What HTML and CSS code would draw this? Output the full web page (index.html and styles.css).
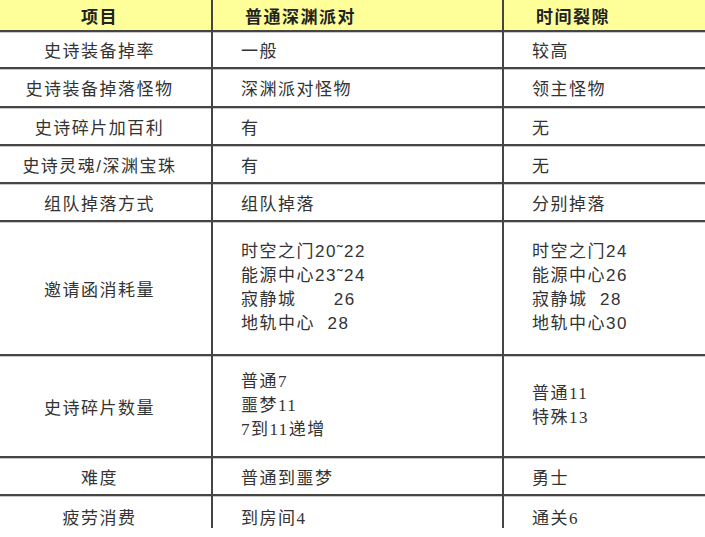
FILE: index.html
```html
<!DOCTYPE html>
<html lang="zh-CN">
<head>
<meta charset="utf-8">
<title>深渊派对对比</title>
<link rel="stylesheet" href="styles.css">
</head>
<body>
<div class="sheet">
  <div class="row head">
    <div class="c1">项目</div>
    <div class="c2">普通深渊派对</div>
    <div class="c3">时间裂隙</div>
  </div>
  <div class="row r1">
    <div class="c1">史诗装备掉率</div>
    <div class="c2">一般</div>
    <div class="c3">较高</div>
  </div>
  <div class="row r2">
    <div class="c1">史诗装备掉落怪物</div>
    <div class="c2">深渊派对怪物</div>
    <div class="c3">领主怪物</div>
  </div>
  <div class="row r3">
    <div class="c1">史诗碎片加百利</div>
    <div class="c2">有</div>
    <div class="c3">无</div>
  </div>
  <div class="row r3">
    <div class="c1">史诗灵魂/深渊宝珠</div>
    <div class="c2">有</div>
    <div class="c3">无</div>
  </div>
  <div class="row r3">
    <div class="c1">组队掉落方式</div>
    <div class="c2">组队掉落</div>
    <div class="c3">分别掉落</div>
  </div>
  <div class="row r6">
    <div class="c1">邀请函消耗量</div>
    <div class="c2 multi">
      <span>时空之门20˜22</span>
      <span>能源中心23˜24</span>
      <span>寂静城&nbsp;&nbsp;&nbsp;&nbsp;&nbsp;&nbsp;26</span>
      <span>地轨中心&nbsp;&nbsp;28</span>
    </div>
    <div class="c3 multi">
      <span>时空之门24</span>
      <span>能源中心26</span>
      <span>寂静城&nbsp;&nbsp;28</span>
      <span>地轨中心30</span>
    </div>
  </div>
  <div class="row r7">
    <div class="c1">史诗碎片数量</div>
    <div class="c2 multi serifnum">
      <span>普通7</span>
      <span>噩梦11</span>
      <span>7到11递增</span>
    </div>
    <div class="c3 multi serifnum">
      <span>普通11</span>
      <span>特殊13</span>
    </div>
  </div>
  <div class="row r3">
    <div class="c1">难度</div>
    <div class="c2">普通到噩梦</div>
    <div class="c3">勇士</div>
  </div>
  <div class="row last">
    <div class="c1">疲劳消费</div>
    <div class="c2 serifnum">到房间4</div>
    <div class="c3 serifnum">通关6</div>
  </div>
</div>
</body>
</html>
```

FILE: styles.css
```css
html, body {
  margin: 0;
  padding: 0;
  background: #ffffff;
}

body {
  width: 705px;
  height: 537px;
  overflow: hidden;
  font-family: "Liberation Sans", "Noto Sans CJK SC", sans-serif;
  font-size: 17px;
  letter-spacing: 1.5px;
  color: #333333;
}

.sheet {
  height: 528px;
  overflow: hidden;
  display: flex;
  flex-direction: column;
}

.row {
  display: grid;
  grid-template-columns: 211px 291px 1fr;
  border-bottom: 2px solid #454545;
  box-shadow: 0 1px 0 #c8c8c8;
  box-sizing: border-box;
  flex: none;
}

.row > div {
  display: flex;
  align-items: center;
}

.c1 {
  justify-content: center;
  padding-right: 12px;
}

.c2, .c3 {
  border-left: 2px solid #454545;
  padding-left: 28px;
}

.multi {
  flex-direction: column;
  align-items: flex-start !important;
  justify-content: center;
  line-height: 24px;
}

.serifnum {
  font-family: "Liberation Serif", "Noto Sans CJK SC", serif;
}

.head {
  height: 32px;
  background: #ffff99;
  font-weight: bold;
  color: #222222;
}

.head .c2, .head .c3 {
  padding-left: 32px;
}

.r1 { height: 37px; }
.r2 { height: 39px; }
.r3 { height: 38px; }
.r6 { height: 134px; }
.r7 { height: 102px; }

.last {
  height: 40px;
  border-bottom: none;
  box-shadow: none;
}
```
